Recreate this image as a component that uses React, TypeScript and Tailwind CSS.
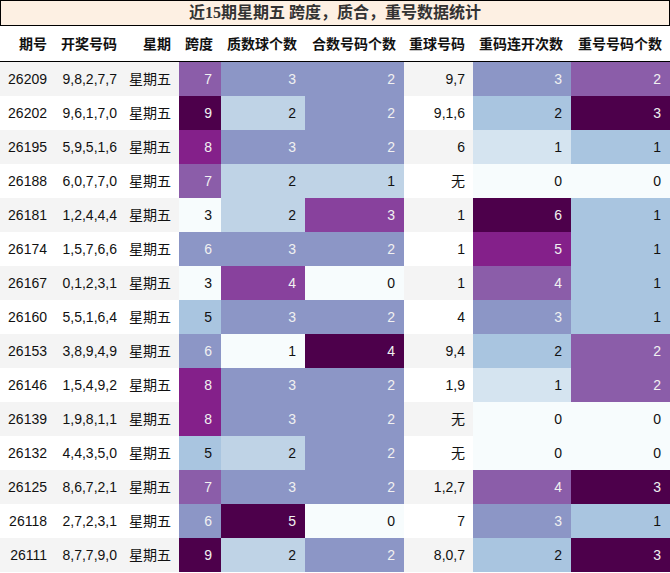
import React from 'react';

// BuPu steps used by the heat columns
const C = {
  c0: '#f7fcfd',
  c17: '#d5e4f0',
  c25: '#bfd3e6',
  c33: '#a9c5e0',
  c50: '#8c96c6',
  c67: '#8b5da9',
  c75: '#88419d',
  c83: '#84208a',
  c100: '#4d004b',
};

const LIGHT_BG = new Set([C.c0, C.c17, C.c25, C.c33]);

const spanColor: Record<number, string> = { 3: C.c0, 5: C.c33, 6: C.c50, 7: C.c67, 8: C.c83, 9: C.c100 };
const primeColor: Record<number, string> = { 1: C.c0, 2: C.c25, 3: C.c50, 4: C.c75, 5: C.c100 };
const compColor: Record<number, string> = { 0: C.c0, 1: C.c25, 2: C.c50, 3: C.c75, 4: C.c100 };
const streakColor: Record<number, string> = { 0: C.c0, 1: C.c17, 2: C.c33, 3: C.c50, 4: C.c67, 5: C.c83, 6: C.c100 };
const repeatColor: Record<number, string> = { 0: C.c0, 1: C.c33, 2: C.c67, 3: C.c100 };

type Row = [string, string, number, number, number, string, number, number];

const rows: Row[] = [
  ['26209', '9,8,2,7,7', 7, 3, 2, '9,7', 3, 2],
  ['26202', '9,6,1,7,0', 9, 2, 2, '9,1,6', 2, 3],
  ['26195', '5,9,5,1,6', 8, 3, 2, '6', 1, 1],
  ['26188', '6,0,7,7,0', 7, 2, 1, '无', 0, 0],
  ['26181', '1,2,4,4,4', 3, 2, 3, '1', 6, 1],
  ['26174', '1,5,7,6,6', 6, 3, 2, '1', 5, 1],
  ['26167', '0,1,2,3,1', 3, 4, 0, '1', 4, 1],
  ['26160', '5,5,1,6,4', 5, 3, 2, '4', 3, 1],
  ['26153', '3,8,9,4,9', 6, 1, 4, '9,4', 2, 2],
  ['26146', '1,5,4,9,2', 8, 3, 2, '1,9', 1, 2],
  ['26139', '1,9,8,1,1', 8, 3, 2, '无', 0, 0],
  ['26132', '4,4,3,5,0', 5, 2, 2, '无', 0, 0],
  ['26125', '8,6,7,2,1', 7, 3, 2, '1,2,7', 4, 3],
  ['26118', '2,7,2,3,1', 6, 5, 0, '7', 3, 1],
  ['26111', '8,7,7,9,0', 9, 2, 2, '8,0,7', 2, 3],
];

const headers = ['期号', '开奖号码', '星期', '跨度', '质数球个数', '合数号码个数', '重球号码', '重码连开次数', '重号号码个数'];

const grid = 'grid grid-cols-[55px_70px_54px_42px_84px_99px_69px_98px_99px]';

const HeatCell = ({ value, bg }: { value: number; bg: string }) => (
  <div
    className={`h-[34px] flex items-center justify-end pr-[9px] ${LIGHT_BG.has(bg) ? 'text-[#111]' : 'text-[#f1f1f1]'}`}
    style={{ backgroundColor: bg }}
  >
    {value}
  </div>
);

const PlainCell = ({ children }: { children: React.ReactNode }) => (
  <div className="h-[34px] flex items-center justify-end pr-[8px] text-[#111]">{children}</div>
);

export default function App() {
  return (
    <div className="w-[670px] bg-white font-['Liberation_Sans','Noto_Sans_CJK_SC',sans-serif] text-[14px] leading-none">
      <div className="h-[26px] border border-black bg-[#fdf0e3] flex items-center justify-center font-['Liberation_Serif','Noto_Sans_CJK_SC',serif] font-bold text-[16px] text-[#333]">
        近15期星期五 跨度，质合，重号数据统计
      </div>
      <div className={`${grid} h-[36px] border-b border-black font-bold text-[#111]`}>
        {headers.map((h) => (
          <div key={h} className="flex items-center justify-end pr-[8px]">
            {h}
          </div>
        ))}
      </div>
      {rows.map((r, i) => (
        <div key={r[0]} className={`${grid} ${i % 2 === 0 ? 'bg-[#f4f4f4]' : 'bg-white'}`}>
          <PlainCell>{r[0]}</PlainCell>
          <PlainCell>{r[1]}</PlainCell>
          <PlainCell>星期五</PlainCell>
          <HeatCell value={r[2]} bg={spanColor[r[2]]} />
          <HeatCell value={r[3]} bg={primeColor[r[3]]} />
          <HeatCell value={r[4]} bg={compColor[r[4]]} />
          <PlainCell>{r[5]}</PlainCell>
          <HeatCell value={r[6]} bg={streakColor[r[6]]} />
          <HeatCell value={r[7]} bg={repeatColor[r[7]]} />
        </div>
      ))}
    </div>
  );
}
